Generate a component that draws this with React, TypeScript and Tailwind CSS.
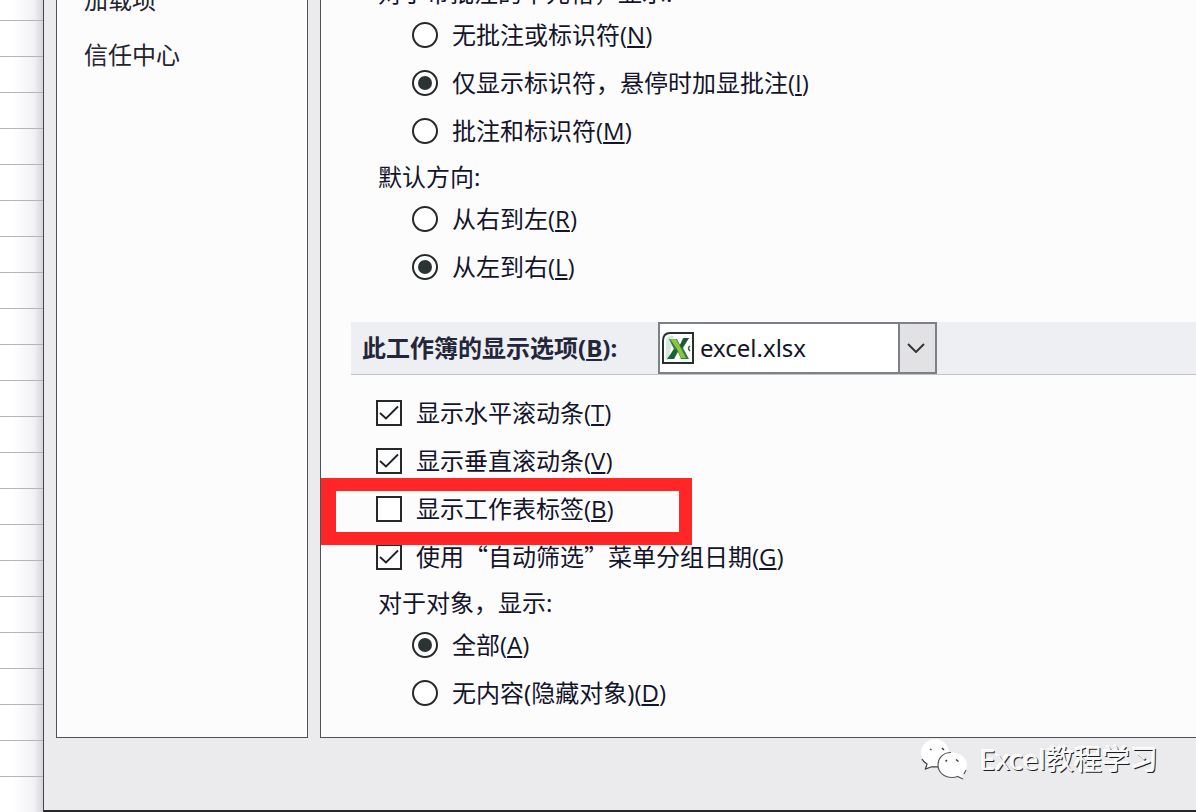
import type { ReactNode } from "react";

interface OptionProps {
  label: ReactNode;
  accessKey: string;
  defaultChecked?: boolean;
}

interface RadioProps extends OptionProps {
  name: string;
}

function AccessKey({ children }: { children: string }) {
  return (
    <span className="font-['Open_Sans','Noto_Sans',sans-serif]">
      (<span className="underline decoration-2 underline-offset-2">{children}</span>)
    </span>
  );
}

function RadioOption({ name, label, accessKey, defaultChecked }: RadioProps) {
  return (
    <label className="ml-9 flex h-12 items-center gap-3.5">
      <input
        type="radio"
        name={name}
        defaultChecked={defaultChecked}
        className="grid size-[26px] shrink-0 appearance-none place-items-center rounded-full border-2 border-[#26292b] bg-white before:size-3.5 before:rounded-full checked:before:bg-[#2c3333]"
      />
      <span className="whitespace-nowrap">
        {label}
        <AccessKey>{accessKey}</AccessKey>
      </span>
    </label>
  );
}

function CheckOption({ label, accessKey, defaultChecked }: OptionProps) {
  return (
    <label className="flex h-12 items-center gap-3.5">
      <span className="grid size-[26px] shrink-0">
        <input
          type="checkbox"
          defaultChecked={defaultChecked}
          className="peer col-start-1 row-start-1 size-[26px] appearance-none border-2 border-[#26292b] bg-white"
        />
        <svg
          viewBox="0 0 26 26"
          className="pointer-events-none invisible col-start-1 row-start-1 size-[26px] peer-checked:visible"
          fill="none"
          stroke="#1d2022"
          strokeWidth="1.800"
        >
          <path d="M4 13 10 18.500 22 6.500" />
        </svg>
      </span>
      <span className="whitespace-nowrap">
        {label}
        <AccessKey>{accessKey}</AccessKey>
      </span>
    </label>
  );
}

function GroupTitle({ children }: { children: ReactNode }) {
  return <p className="h-10 pt-1 pl-0.5 leading-9 whitespace-nowrap">{children}</p>;
}

function WorkbookIcon() {
  return (
    <svg viewBox="0 0 32 32" className="size-8" fill="none">
      <path d="M8 1H31V31H1V9Q1 1 8 1Z" fill="#fff" stroke="#26332c" strokeWidth="2" />
      <path d="M4 10Q4 4 9 4H12L6 28H4Z" fill="#d5e8dc" />
      <path d="M7 7H15L18 13 21 6H27L21 16 27 27H19L16 20 12 27H5L12 17Z" fill="#2d7d3c" />
      <path d="M8 7H14L24 26H19L15 17Z" fill="#8cc63f" />
      <path d="M12 17 15 19 12 27H6Z" fill="#17633c" />
      <path d="M22 6H27L20 16 18 13Z" fill="#245340" />
      <path d="M28 14Q25 16 28 19" stroke="#3d5948" strokeWidth="1.5" />
    </svg>
  );
}

function WorkbookSelect() {
  return (
    <div className="relative h-[52px] w-[279px] shrink-0">
      <select
        id="workbook"
        className="size-full appearance-none border-2 border-[#7c8088] bg-white pr-10 pl-10 text-[#14142a]"
      >
        <option>excel.xlsx</option>
      </select>
      <span className="pointer-events-none absolute top-2.5 left-1">
        <WorkbookIcon />
      </span>
      <span className="pointer-events-none absolute inset-y-0 right-0 flex w-[39px] items-center border-2 border-[#7c8088] bg-[#e2e2e4] pl-[7px]">
        <svg viewBox="0 0 18 10" className="h-2.5 w-[18px]" fill="none" stroke="#333639" strokeWidth="2">
          <path d="M1 1 9 9 17 1" />
        </svg>
      </span>
    </div>
  );
}

function WeChatMark() {
  return (
    <svg viewBox="0 0 48 42" className="h-[42px] w-12">
      <path
        d="M16 1C7.500 1 1 7 1 14.500 1 19 3 22.500 7 25.500L5.500 31 12 28.500Q17 30 20 29C34 27 32 2 16 1Z"
        fill="#fff"
      />
      <path d="M2 21Q3.500 24 7 26L5.500 31 11.500 28.800H18" fill="none" stroke="#3b3d40" strokeWidth="1.200" />
      <path
        d="M32 14.500C24 14.500 18 20 18 27S24 39.500 32 39.500Q35 39.500 37.500 38.500L43 41 41.500 36.500C45 34 47 31 47 27 47 20 40 14.500 32 14.500Z"
        fill="#fff"
      />
      <path
        d="M31 14.500C23 14.500 18 20 18 27S24 39.500 32 39.500Q35 39.500 37.500 38.500L43 41 M44 36 46 32"
        fill="none"
        stroke="#55585b"
        strokeWidth="1.200"
      />
      <path
        d="M10 11 11.500 12M22 10 24 12M27 22 25.500 23.500M36 21.500 38.500 23.500"
        stroke="#3b3d40"
        strokeWidth="1.500"
      />
    </svg>
  );
}

export default function App() {
  return (
    <div
      lang="zh-CN"
      className="flex h-screen overflow-hidden bg-white font-['Noto_Sans','Noto_Sans_CJK_SC',sans-serif] text-2xl text-[#14142a]"
    >
      {/* worksheet rows showing beside the dialog */}
      <div className="w-[43px] shrink-0 bg-linear-to-r from-white from-30% via-[#f1f1f4] via-80% to-[#d6d6da]">
        <div className="h-[21px] border-b border-[#b4b5b8]" />
        {Array.from({ length: 21 }, (_, i) => (
          <div key={i} className="h-9 border-b border-[#b4b5b8]" />
        ))}
      </div>

      <div className="flex min-w-0 grow flex-col border-b-2 border-l border-b-[#26282a] border-l-[#44474a] bg-[#ebebed]">
        <div className="flex min-h-0 grow gap-3 pl-3">
          <nav className="w-[252px] shrink-0 overflow-hidden border-x border-b border-[#4d5158] bg-[#fcfcfd] pl-[27px] text-[#24242e]">
            <ul className="-mt-7">
              <li>
                <a href="#addins" className="block h-[55px] leading-[55px]">
                  加载项
                </a>
              </li>
              <li>
                <a href="#trust" className="block h-[55px] leading-[55px]">
                  信任中心
                </a>
              </li>
            </ul>
          </nav>

          <main className="min-w-0 grow overflow-hidden border-b border-l border-[#4d5158] bg-[#fcfcfd] pl-[30px]">
            <section className="-mt-[29px] pl-[25px]">
              <GroupTitle>对于带批注的单元格，显示:</GroupTitle>
              <RadioOption name="comments" label="无批注或标识符" accessKey="N" />
              <RadioOption
                name="comments"
                label="仅显示标识符，悬停时加显批注"
                accessKey="I"
                defaultChecked
              />
              <RadioOption name="comments" label="批注和标识符" accessKey="M" />
              <GroupTitle>默认方向:</GroupTitle>
              <RadioOption name="direction" label="从右到左" accessKey="R" />
              <RadioOption name="direction" label="从左到右" accessKey="L" defaultChecked />
            </section>

            <div className="mt-[31px] flex h-[53px] items-start border-b border-[#c3c4c8] bg-[#eeeff2] pl-[11px]">
              <label htmlFor="workbook" className="w-[296px] shrink-0 leading-[51px] font-bold whitespace-nowrap text-[#24263a]">
                此工作簿的显示选项
                <AccessKey>B</AccessKey>:
              </label>
              <WorkbookSelect />
            </div>

            <section className="mt-3.5 pl-[25px]">
              <CheckOption label="显示水平滚动条" accessKey="T" defaultChecked />
              <CheckOption label="显示垂直滚动条" accessKey="V" defaultChecked />
              <div className="relative">
                <CheckOption label="显示工作表标签" accessKey="B" />
                <div className="pointer-events-none absolute -top-[7px] -bottom-3 -left-[55px] z-10 w-[371px] border-[13px] border-l-[15px] border-[#fe2626]" />
              </div>
              <CheckOption
                label={
                  <>
                    使用
                    <span className="font-['Noto_Sans_CJK_SC',sans-serif] leading-none">“自动筛选”</span>
                    菜单分组日期
                  </>
                }
                accessKey="G"
                defaultChecked
              />
              <GroupTitle>对于对象，显示:</GroupTitle>
              <RadioOption name="objects" label="全部" accessKey="A" defaultChecked />
              <RadioOption name="objects" label="无内容(隐藏对象)" accessKey="D" />
            </section>
          </main>
        </div>

        <footer className="flex h-[72px] shrink-0 items-start justify-end gap-3 pr-[38px]">
          <WeChatMark />
          <span className="text-[28px] leading-[42px] whitespace-nowrap text-[#f6f6f7] [text-shadow:1px_1px_0_#1c1d20,-1px_-1px_0_#fff]">
            Excel教程学习
          </span>
        </footer>
      </div>
    </div>
  );
}
